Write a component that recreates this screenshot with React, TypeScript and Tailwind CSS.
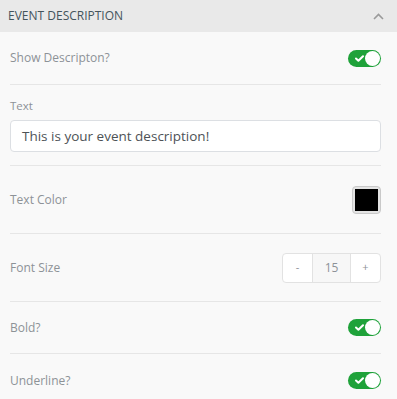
import React from 'react';

const Toggle = () => (
  <div className="relative w-[33px] h-[17px] rounded-full bg-[#1fa23a]">
    <svg className="absolute left-[7px] top-[5px]" width="9" height="7" viewBox="0 0 9 7" fill="none">
      <path d="M1 3.5 L3.4 5.8 L8 1.2" stroke="white" strokeWidth="2" strokeLinecap="round" strokeLinejoin="round" />
    </svg>
    <div className="absolute right-[1px] top-[1px] w-[15px] h-[15px] rounded-full bg-white" />
  </div>
);

const Row = ({ label, height, children }: { label: string; height: string; children: React.ReactNode }) => (
  <div className={`flex items-center justify-between border-b border-[#e6e6e6] ${height}`}>
    <span className="text-[12px] text-[#8d9297]">{label}</span>
    {children}
  </div>
);

export default function App() {
  return (
    <div className="w-[397px] h-[399px] overflow-hidden bg-[#f9f9f9]" style={{ fontFamily: '"Open Sans", sans-serif' }}>
      <div className="h-8 bg-[#e9e9e9] flex items-center justify-between pl-2 pr-[13px]">
        <span className="text-[12px] text-[#44545c]">EVENT DESCRIPTION</span>
        <svg width="11" height="7" viewBox="0 0 11 7" fill="none">
          <path d="M1 6 L5.5 1.5 L10 6" stroke="#9a9a9a" strokeWidth="1.6" />
        </svg>
      </div>
      <div className="mx-[10px] w-[371px]">
        <Row label="Show Descripton?" height="h-[53px]">
          <Toggle />
        </Row>
        <div className="h-[81px] border-b border-[#e6e6e6] pt-[13px]">
          <div className="text-[11.5px] text-[#8d9297] leading-4">Text</div>
          <div className="mt-[6px] h-8 rounded border border-[#dcdfe3] bg-white flex items-center px-[11px] text-[13.5px] text-[#4d5256]">
            This is your event description!
          </div>
        </div>
        <Row label="Text Color" height="h-[68px]">
          <div className="w-[29px] h-[28px] rounded border border-[#c9c9c9] bg-[#e4e4e4] p-[2px]">
            <div className="w-full h-full bg-black" />
          </div>
        </Row>
        <Row label="Font Size" height="h-[68px]">
          <div className="flex h-[30px] rounded border border-[#e2e2e2] bg-white text-[11px] text-[#8d9297]">
            <div className="w-[30px] flex items-center justify-center border-r border-[#e2e2e2]">-</div>
            <div className="w-[38px] flex items-center justify-center border-r border-[#e2e2e2] bg-[#f7f7f7] text-[12px]">15</div>
            <div className="w-[29px] flex items-center justify-center">+</div>
          </div>
        </Row>
        <Row label="Bold?" height="h-[52px]">
          <Toggle />
        </Row>
        <Row label="Underline?" height="h-[54px]">
          <Toggle />
        </Row>
      </div>
    </div>
  );
}
